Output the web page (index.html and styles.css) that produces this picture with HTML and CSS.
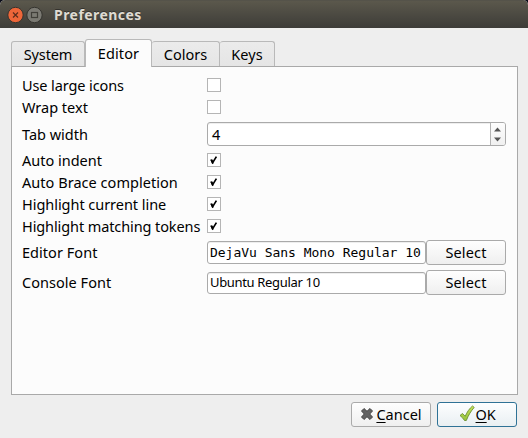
FILE: index.html
```html
<!DOCTYPE html>
<html lang="en">
<head>
<meta charset="utf-8">
<title>Preferences</title>
<link rel="stylesheet" href="styles.css">
</head>
<body>
<svg class="defs" width="0" height="0"><defs>
<linearGradient id="green" x1="0" y1="0" x2="0" y2="1"><stop offset="0" stop-color="#c9e35c"/><stop offset="1" stop-color="#94c23c"/></linearGradient>
<symbol id="tick" viewBox="0 0 12 12"><path d="M3.2 5.8 L4.7 8.6 L8.4 2.6" fill="none" stroke="#000" stroke-width="1.7"/><path d="M2.4 5.4h2l.8 2 .2 2.3H4z"/></symbol>
</defs></svg>
<div class="window">
<header class="titlebar">
<svg class="controls" width="36" height="18" viewBox="0 0 36 18">
<circle cx="8.5" cy="9" r="7.7" fill="#ee6639" stroke="#35342f"/><path d="M6 6.5l5 5m0-5l-5 5" stroke="#5d2d1c" stroke-width="1.2"/>
<circle cx="27.500" cy="9" r="7.7" fill="#7b7a73" stroke="#35342f"/><rect x="24.500" y="6.500" width="6" height="5" fill="none" stroke="#403f39" stroke-width="1.2"/>
</svg>
<h1>Preferences</h1>
</header>
<nav class="tabs">
<div class="tab system"><span>System</span></div><div class="tab editor active"><span>Editor</span></div><div class="tab colors"><span>Colors</span></div><div class="tab keys"><span>Keys</span></div>
</nav>
<main class="pane">
<div class="row"><label class="snug">Use large icons</label><i class="check"></i></div>
<div class="row"><label>Wrap text</label><i class="check"></i></div>
<div class="row spinrow"><label>Tab width</label><div class="spin"><span>4</span><div class="arrows"><svg width="14" height="22" viewBox="0 0 14 22"><path d="M3 8.500L6.500 4.500 10 8.500zM3 14.500h7L6.500 18.500z" fill="#555"/></svg></div></div></div>
<div class="row"><label>Auto indent</label><i class="check"><svg><use href="#tick"/></svg></i></div>
<div class="row"><label class="wide">Auto Brace completion</label><i class="check"><svg><use href="#tick"/></svg></i></div>
<div class="row"><label class="slight">Highlight current line</label><i class="check"><svg><use href="#tick"/></svg></i></div>
<div class="row"><label class="snug">Highlight matching tokens</label><i class="check"><svg><use href="#tick"/></svg></i></div>
<div class="row fontrow"><label class="wide">Editor Font</label><div class="field mono">DejaVu Sans Mono Regular 10</div><button class="select"><span>Select</span></button></div>
<div class="row fontrow"><label class="wide">Console Font</label><div class="field short">Ubuntu Regular 10</div><button class="select"><span>Select</span></button></div>
</main>
<footer class="actions">
<button class="cancel"><svg width="14" height="14" viewBox="0 0 14 14"><path d="M1.500 4L4 1.500 7 4.300 10 1.500 12.500 4 9.700 7 12.500 10 10 12.500 7 9.700 4 12.500 1.500 10 4.300 7z" fill="#626262" stroke="#444" stroke-linejoin="round"/></svg><span><u>C</u>ancel</span></button>
<button class="ok"><svg width="16" height="17" viewBox="0 0 16 17"><path d="M1 10.500L3.500 8.500 6.200 11.300C8 7 10.500 3.500 13.500 1L15.200 2.400C12 6 9.500 10 7.300 15.500H5.500C4.300 13.500 3 12 1 10.500z" fill="url(#green)" stroke="#6b9030" stroke-width=".9" stroke-linejoin="round"/></svg><span><u>O</u>K</span></button>
</footer>
</div>
</body>
</html>
```
FILE: styles.css
```css
* { box-sizing: border-box; }
body { margin: 0; background: #090b17; font: 14.5px/20px "Noto Sans", "Open Sans", sans-serif; color: #000; }
.defs { position: absolute; }
.window { width: 528px; height: 438px; background: #eee; border-radius: 5px 5px 0 0; overflow: hidden; display: flex; flex-direction: column; }
.titlebar { height: 28px; flex: none; display: flex; align-items: center; padding: 0 0 0 7px; background: linear-gradient(#5b584c, #3d3c38); border-top: 1px solid #55534a; }
.titlebar h1 { margin: 0 0 0 11px; font-size: 14px; line-height: 20px; font-weight: 700; letter-spacing: .45px; color: #dfdbd2; text-shadow: 0 -1px #33322e; white-space: nowrap; }
.controls { flex: none; }
.tabs { height: 38px; flex: none; display: flex; align-items: flex-end; padding: 0 11px; }
.tab { height: 25px; border: 1px solid #b9b9b9; border-bottom: 0; border-left-width: 0; border-radius: 3px 3px 0 0; background: linear-gradient(#ebebeb, #e5e5e5); display: flex; align-items: center; justify-content: center; padding-bottom: 1px; }
.tab.system { width: 74px; border-left-width: 1px; letter-spacing: -.1px; }
.tab.editor { width: 67px; letter-spacing: .1px; }
.tab.colors { width: 68px; }
.tab.keys { width: 55px; letter-spacing: .1px; }
.tab.active { height: 28px; margin-bottom: -1px; background: #fcfcfc; position: relative; border-left-width: 1px; padding-bottom: 2px; }
.pane { height: 329px; flex: none; width: 507px; margin-left: 11px; border: 1px solid #a9a9a9; background: #fcfcfc; padding: 7px 10px 0; }
.row { height: 22px; display: flex; align-items: center; }
.row label { width: 185px; flex: none; white-space: nowrap; }
.row .snug { letter-spacing: -.1px; }
.row .slight { letter-spacing: -.04px; }
.row .wide { letter-spacing: .04px; }
.check { width: 14px; height: 14px; border: 1px solid #b5b5b5; background: #fff; display: block; flex: none; }
.check svg { display: block; width: 12px; height: 12px; }
.spinrow { height: 31px; }
.spin { width: 299px; height: 24px; margin-top: 1px; border: 1px solid #aaa; border-radius: 3px; background: #fff; display: flex; align-items: center; justify-content: space-between; padding-left: 4px; overflow: hidden; box-shadow: inset 0 1px #eee; }
.arrows { width: 15px; height: 22px; border-left: 1px solid #b3b3b3; background: linear-gradient(#fdfdfd, #f0f0f0); }
.arrows svg { display: block; }
.fontrow { height: 30px; padding-top: 1px; }
.fontrow label { margin-top: -2px; }
.field { width: 219px; height: 23px; border: 1px solid #aaa; border-radius: 3px; background: #fff; padding-left: 2px; line-height: 21px; white-space: pre; overflow: hidden; box-shadow: inset 0 1px #eee; }
.mono { font-family: "DejaVu Sans Mono", monospace; font-size: 13px; letter-spacing: -.02px; }
.short { height: 22px; line-height: 19px; font-size: 13px; letter-spacing: -.33px; }
button { font: inherit; color: inherit; width: 80px; height: 25px; padding: 0 0 2px; border: 1px solid #aaa; border-radius: 3px; background: linear-gradient(#fefefe, #efefef); display: flex; align-items: center; justify-content: center; white-space: nowrap; }
.select { letter-spacing: .15px; }
.actions { display: flex; gap: 6px; justify-content: flex-end; padding: 7px 11px 0 0; }
.ok { border-color: #2f7296; background: linear-gradient(#fdfeff, #e9eff2); }
.ok span { margin-left: -1px; letter-spacing: -.2px; }
u { text-underline-offset: 2px; text-decoration-thickness: 1px; text-decoration-skip-ink: none; }
.actions svg { margin-right: 2px; }
```
